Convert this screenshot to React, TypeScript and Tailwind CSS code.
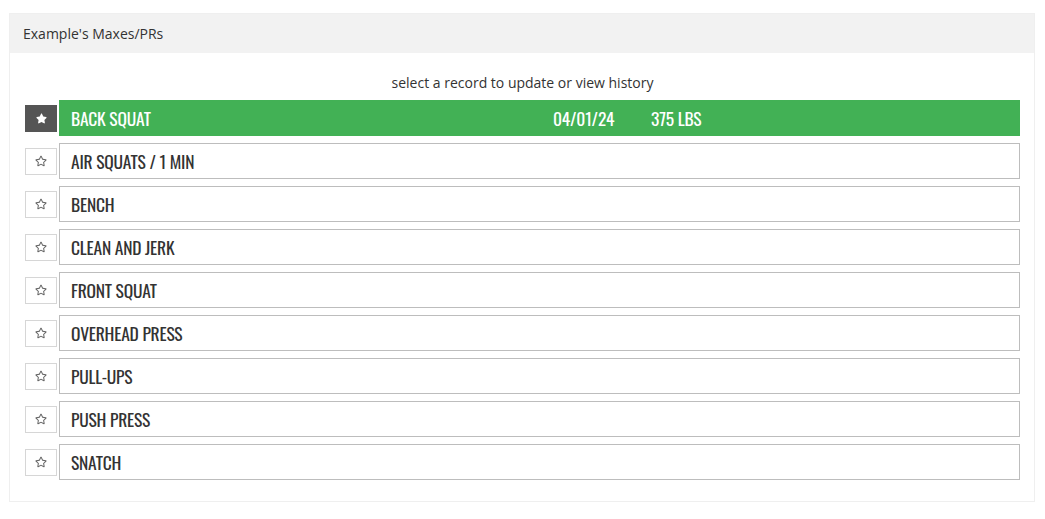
import { FaStar, FaRegStar } from "react-icons/fa";

type Record = {
  name: string;
  date?: string;
  value?: string;
  favorite?: boolean;
};

const records: Record[] = [
  { name: "BACK SQUAT", date: "04/01/24", value: "375 LBS", favorite: true },
  { name: "AIR SQUATS / 1 MIN" },
  { name: "BENCH" },
  { name: "CLEAN AND JERK" },
  { name: "FRONT SQUAT" },
  { name: "OVERHEAD PRESS" },
  { name: "PULL-UPS" },
  { name: "PUSH PRESS" },
  { name: "SNATCH" },
];

const condensed = "font-['Oswald','Liberation_Sans_Narrow','DejaVu_Sans_Condensed',sans-serif]";

function RecordRow({ record }: { record: Record }) {
  const fav = !!record.favorite;
  return (
    <div className="flex items-center gap-[2px]">
      <button
        className={`w-[32px] h-[27px] flex items-center justify-center border ${
          fav ? "bg-[#555555] border-[#555555] text-white" : "bg-white border-[#d6d6d6] text-[#666]"
        }`}
      >
        {fav ? <FaStar className="w-[11px] h-[11px]" /> : <FaRegStar className="w-[12px] h-[12px]" />}
      </button>
      <div
        className={`flex-1 h-[36px] flex items-center pl-[11px] text-[17.5px] tracking-[-0.2px] border ${condensed} ${
          fav ? "bg-[#42b155] border-[#42b155] text-white" : "bg-white border-[#bdbdbd] text-[#333]"
        }`}
      >
        <span className="w-[482px]">{record.name}</span>
        {record.date && <span className="w-[98px]">{record.date}</span>}
        {record.value && <span>{record.value}</span>}
      </div>
    </div>
  );
}

export default function App() {
  return (
    <div className="w-full h-[519px] bg-white pt-[13px] px-[9px] font-['Open_Sans',sans-serif] text-[#333]">
      <div className="w-[1026px] border border-[#efefef]">
        <div className="h-[39px] bg-[#f2f2f2] flex items-center px-[13px] text-[14px]">Example's Maxes/PRs</div>
        <div className="pt-[21px] pb-[21px] pl-[15px] pr-[14px]">
          <div className="text-center text-[14px] leading-[18px] mb-[8px]">select a record to update or view history</div>
          <div className="flex flex-col gap-[7px]">
            {records.map((r) => (
              <RecordRow key={r.name} record={r} />
            ))}
          </div>
        </div>
      </div>
    </div>
  );
}
